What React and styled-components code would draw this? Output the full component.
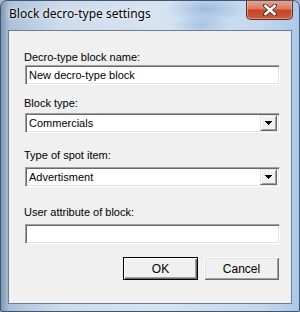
import React from "react"
import styled, { createGlobalStyle } from "styled-components"

const GlobalStyle = createGlobalStyle`
  html, body {
    margin: 0;
    padding: 0;
    background: #9fb9d6;
  }
`

const UI_FONT = `"Liberation Sans", Arial, sans-serif`

const Window = styled.div`
  width: 300px;
  height: 312px;
  box-sizing: border-box;
  border: 1px solid #44566c;
  border-radius: 7px 7px 2px 2px;
  padding: 0 7px 7px 7px;
  display: flex;
  flex-direction: column;
  background:
    radial-gradient(ellipse 40px 14px at 205px 8px, rgba(120, 160, 210, 0.55), transparent),
    radial-gradient(ellipse 30px 10px at 200px 24px, rgba(120, 160, 210, 0.45), transparent),
    linear-gradient(90deg, #7f97b4 0px, #aac0d9 8px, #cddcec 60px, #d6e3f1 160px, #c4d8ee 260px, #a9c8ea 300px);
  overflow: hidden;
`

const TitleBar = styled.div`
  height: 29px;
  display: flex;
  justify-content: space-between;
  align-items: flex-start;
`

const Title = styled.div`
  font-family: "Noto Sans", "Open Sans", sans-serif;
  font-size: 12px;
  color: #000;
  padding-top: 4px;
  padding-left: 1px;
  text-shadow: 0 0 6px rgba(255, 255, 255, 0.9), 0 0 2px rgba(255, 255, 255, 0.9);
`

const CloseButton = styled.div`
  width: 47px;
  height: 20px;
  margin-top: -1px;
  margin-right: -1px;
  box-sizing: border-box;
  border: 1px solid #5b2b24;
  border-top: none;
  border-radius: 0 0 5px 5px;
  background: linear-gradient(180deg, #e9a996 0%, #dc7a63 45%, #c8432a 55%, #c95a3f 100%);
  box-shadow: inset 0 0 0 1px rgba(255, 220, 200, 0.45);
  display: flex;
  align-items: center;
  justify-content: center;
`

const Client = styled.div`
  flex: 1;
  background: #f0f0f0;
  border: 1px solid #6a7d93;
  padding: 20px 12px 0 15px;
  display: flex;
  flex-direction: column;
  font-family: ${UI_FONT};
  font-size: 11px;
  color: #000;
`

const Field = styled.div`
  display: flex;
  flex-direction: column;
  gap: ${(p) => p.$gap}px;
  margin-top: ${(p) => p.$top || 0}px;
  padding-left: 1px;
`

const Label = styled.div`
  line-height: 13px;
  margin-left: -1px;
`

const sunken = `
  box-sizing: border-box;
  background: #fff;
  border-top: 1px solid #a0a0a0;
  border-left: 1px solid #a0a0a0;
  border-right: 1px solid #ffffff;
  border-bottom: 1px solid #ffffff;
  box-shadow: inset 1px 1px 0 #696969, inset -1px -1px 0 #e3e3e3;
`

const TextBox = styled.div`
  ${sunken}
  height: 20px;
  width: 255px;
  padding: 3px 0 0 3px;
  line-height: 13px;
`

const Combo = styled.div`
  ${sunken}
  height: 20px;
  width: 255px;
  padding: 2px 2px 2px 3px;
  display: flex;
  align-items: center;
  justify-content: space-between;
`

const DropButton = styled.div`
  width: 17px;
  height: 16px;
  box-sizing: border-box;
  background: #f0f0f0;
  border-top: 1px solid #e3e3e3;
  border-left: 1px solid #e3e3e3;
  border-right: 1px solid #696969;
  border-bottom: 1px solid #696969;
  box-shadow: inset 1px 1px 0 #fff, inset -1px -1px 0 #a0a0a0;
  display: flex;
  align-items: center;
  justify-content: center;
`

const ButtonRow = styled.div`
  display: flex;
  justify-content: flex-end;
  gap: 6px;
  margin-top: 13px;
`

const Button = styled.div`
  width: 75px;
  height: 23px;
  box-sizing: border-box;
  background: #f0f0f0;
  border: 1px solid #000;
  box-shadow: inset 1px 1px 0 #fff, inset -1px -1px 0 #696969, inset -2px -2px 0 #a0a0a0;
  display: flex;
  align-items: center;
  justify-content: center;
  font-size: 12px;
`

const CancelButton = styled(Button)`
  border: none;
  box-shadow: inset 1px 1px 0 #fff, inset -1px -1px 0 #696969, inset 2px 2px 0 #e3e3e3, inset -2px -2px 0 #a0a0a0;
`

const CloseGlyph = () => (
  <svg width="14" height="12" viewBox="0 0 14 12">
    <path
      d="M2 1.5 L12 10.5 M12 1.5 L2 10.5"
      stroke="#4a2f28"
      strokeWidth="4.2"
      strokeLinecap="square"
      fill="none"
    />
    <path
      d="M2.5 2 L11.5 10 M11.5 2 L2.5 10"
      stroke="#fff"
      strokeWidth="2.6"
      strokeLinecap="square"
      fill="none"
    />
  </svg>
)

const Arrow = () => (
  <svg width="7" height="4" viewBox="0 0 7 4" shapeRendering="crispEdges">
    <rect x="0" y="0" width="7" height="1" fill="#000" />
    <rect x="1" y="1" width="5" height="1" fill="#000" />
    <rect x="2" y="2" width="3" height="1" fill="#000" />
    <rect x="3" y="3" width="1" height="1" fill="#000" />
  </svg>
)

const App = () => {
  return (
    <>
      <GlobalStyle />
      <Window>
        <TitleBar>
          <Title>Block decro-type settings</Title>
          <CloseButton>
            <CloseGlyph />
          </CloseButton>
        </TitleBar>
        <Client>
          <Field $gap={1}>
            <Label>Decro-type block name:</Label>
            <TextBox>New decro-type block</TextBox>
          </Field>
          <Field $top={12} $gap={3}>
            <Label>Block type:</Label>
            <Combo>
              Commercials
              <DropButton>
                <Arrow />
              </DropButton>
            </Combo>
          </Field>
          <Field $top={16} $gap={5}>
            <Label>Type of spot item:</Label>
            <Combo>
              Advertisment
              <DropButton>
                <Arrow />
              </DropButton>
            </Combo>
          </Field>
          <Field $top={19} $gap={5}>
            <Label>User attribute of block:</Label>
            <TextBox />
          </Field>
          <ButtonRow>
            <Button>OK</Button>
            <CancelButton>Cancel</CancelButton>
          </ButtonRow>
        </Client>
      </Window>
    </>
  )
}

export default App
